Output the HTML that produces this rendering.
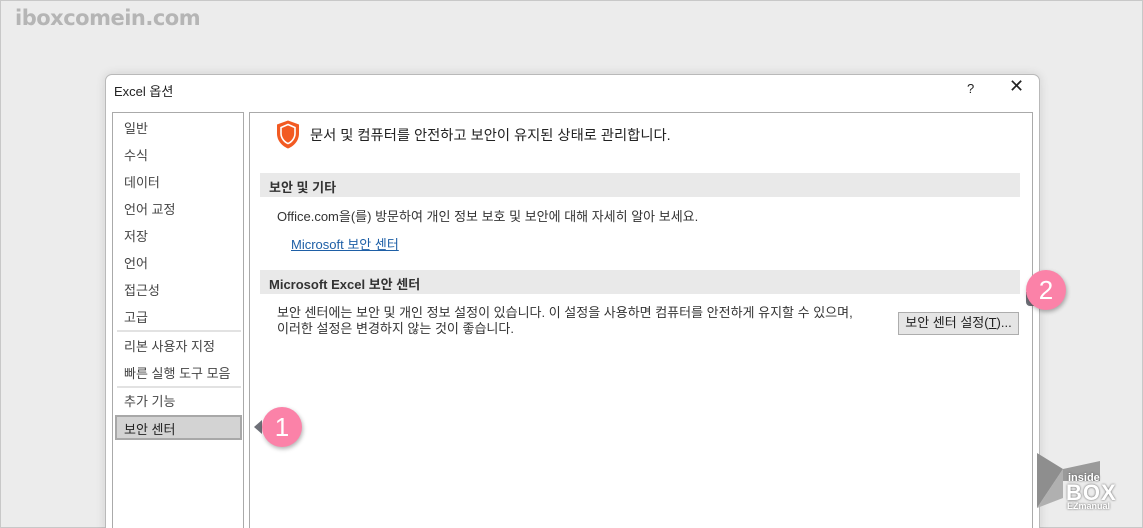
<!DOCTYPE html>
<html><head><meta charset="utf-8"><style>
*{margin:0;padding:0;box-sizing:border-box}
html,body{width:1143px;height:528px;overflow:hidden}
body{background:#ececec;position:relative;font-family:"Liberation Sans","Noto Sans CJK KR",sans-serif;font-size:13px;color:#333}
.frame{position:absolute;left:0;top:0;width:1143px;height:528px;border:1px solid #c8c8c8}
.wm{position:absolute;left:15px;top:6px;font:bold 21px "DejaVu Sans",sans-serif;color:#b5b5b5;letter-spacing:-0.5px}
.dlg{position:absolute;left:105px;top:74px;width:935px;height:460px;background:#fff;border:1px solid #b9b9b9;border-radius:7px 7px 0 0;box-shadow:0 0 10px rgba(0,0,0,.12)}
.title{position:absolute;left:8px;top:6px;font-size:13px;color:#222}
.q{position:absolute;left:861px;top:6px;font-size:13px;color:#222}
.x{position:absolute;left:903px;top:1px;font-size:18px;color:#222}
.nav{position:absolute;left:6px;top:37px;width:132px;height:430px;border:1px solid #aaa}
.nav div{position:absolute;left:11px;font-size:13px;color:#444}
.sep{position:absolute;left:4px;width:124px;height:2px;background:#e2e2e2}
.sel{position:absolute;left:2px;top:302px;width:127px;height:25px;background:#d3d3d3;border:2px solid #a8a8a8}
.main{position:absolute;left:143px;top:37px;width:784px;height:430px;border:1px solid #aaa}
.hd{position:absolute;left:10px;width:760px;height:24px;background:#e9e9e9;font-size:13px;color:#333;padding:4px 9px;font-weight:bold}
.t{position:absolute;font-size:13px;color:#333;white-space:nowrap}
.btn{position:absolute;left:648px;top:199px;width:121px;height:23px;border:1px solid #adadad;background:#e5e5e5;font-size:13px;text-align:center;line-height:20px;color:#222;white-space:nowrap}
.badge{position:absolute;width:40px;height:40px;border-radius:50%;background:#fb82a8;color:#fff;font-size:26px;text-align:center;line-height:40px;box-shadow:1px 2px 4px rgba(0,0,0,.3)}
</style></head><body>
<div class="frame"></div>
<div class="wm">iboxcomein.com</div>
<div class="dlg">
 <div class="title">Excel 옵션</div>
 <div class="q">?</div>
 <div class="x">✕</div>
 <div class="nav">
  <div style="top:5px">일반</div>
  <div style="top:32px">수식</div>
  <div style="top:59px">데이터</div>
  <div style="top:86px">언어 교정</div>
  <div style="top:113px">저장</div>
  <div style="top:140px">언어</div>
  <div style="top:167px">접근성</div>
  <div style="top:194px">고급</div>
  <span class="sep" style="top:217px"></span>
  <div style="top:223px">리본 사용자 지정</div>
  <div style="top:250px">빠른 실행 도구 모음</div>
  <span class="sep" style="top:273px"></span>
  <div style="top:278px">추가 기능</div>
  <span class="sel"></span>
  <div style="top:306px;color:#222">보안 센터</div>
 </div>
 <div class="main">
  <svg style="position:absolute;left:25px;top:6px" width="26" height="31" viewBox="0 0 26 30"><path d="M13 1 L24 5 V14 C24 22 18 27 13 29 C8 27 2 22 2 14 V5 Z" fill="#f25a22"/><path d="M13 5 L20 8 V14 C20 19 16 23 13 24 C10 23 6 19 6 14 V8 Z" fill="none" stroke="#fff" stroke-width="1.6"/></svg>
  <div class="t" style="left:60px;top:11px;font-size:14.3px;color:#222">문서 및 컴퓨터를 안전하고 보안이 유지된 상태로 관리합니다.</div>
  <div class="hd" style="top:60px">보안 및 기타</div>
  <div class="t" style="left:27px;top:93px">Office.com을(를) 방문하여 개인 정보 보호 및 보안에 대해 자세히 알아 보세요.</div>
  <div class="t" style="left:41px;top:121px;color:#1e5fa6;text-decoration:underline">Microsoft 보안 센터</div>
  <div class="hd" style="top:157px">Microsoft Excel 보안 센터</div>
  <div class="t" style="left:27px;top:189px">보안 센터에는 보안 및 개인 정보 설정이 있습니다. 이 설정을 사용하면 컴퓨터를 안전하게 유지할 수 있으며,</div>
  <div class="t" style="left:27px;top:205px">이러한 설정은 변경하지 않는 것이 좋습니다.</div>
  <div class="btn">보안 센터 설정(<u>T</u>)...</div>
 </div>
</div>
<div style="position:absolute;left:254px;top:420px;width:0;height:0;border-top:7px solid transparent;border-bottom:7px solid transparent;border-right:8px solid #6e7078"></div>
<div class="badge" style="left:262px;top:407px">1</div>
<div style="position:absolute;left:1026px;top:292px;width:8px;height:14px;background:#6e7078;border-radius:0 0 0 4px"></div>
<div class="badge" style="left:1026px;top:270px">2</div>
<div style="position:absolute;left:1035px;top:453px;width:95px;height:62px">
 <svg width="95" height="62" viewBox="0 0 95 62"><path d="M2 0 L28 16 L2 55 Z" fill="#8e8e8e"/><path d="M28 16 L2 55 L28 45 Z" fill="#b0b0b0"/><path d="M28 16 L65 8 L65 28 L28 28 Z" fill="#9a9a9a"/></svg>
 <div style="position:absolute;left:33px;top:19px;font:bold 11px 'Liberation Sans',sans-serif;color:#fff;text-shadow:0 0 2px #555">inside</div>
 <div style="position:absolute;left:31px;top:27px;font:bold 22px 'Liberation Sans',sans-serif;color:#fff;text-shadow:0 0 2px #555;letter-spacing:1px">BOX</div>
 <div style="position:absolute;left:32px;top:48px;font:bold 9px 'Liberation Sans',sans-serif;color:#fff;text-shadow:0 0 2px #555">EZmanual</div>
</div>
</body></html>
